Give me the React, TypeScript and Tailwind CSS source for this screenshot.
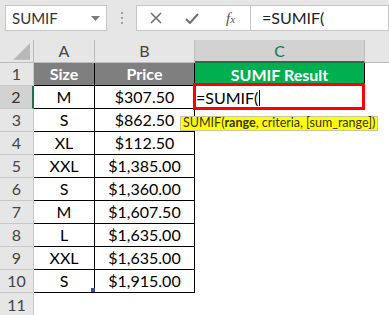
import React from "react";

const rows: [string, string, string][] = [
  ["M", "$307.50", "=SUMIF("],
  ["S", "$862.50", ""],
  ["XL", "$112.50", ""],
  ["XXL", "$1,385.00", ""],
  ["S", "$1,360.00", ""],
  ["M", "$1,607.50", ""],
  ["L", "$1,635.00", ""],
  ["XXL", "$1,635.00", ""],
  ["S", "$1,915.00", ""],
];

export default function App() {
  return (
    <div className="w-[389px] h-[315px] bg-white overflow-hidden relative font-['Lato','Open_Sans',sans-serif]">
      {/* Formula bar */}
      <div className="h-[40px] bg-[#e6e6e6] flex items-start pt-[5px]">
        <div className="ml-[5px] w-[102px] h-[26px] bg-white border border-[#c6c6c6] flex items-center justify-between pl-[6px] pr-[6px]">
          <span className="text-[15px] text-[#333] leading-none">SUMIF</span>
          <svg width="9" height="5" viewBox="0 0 9 5"><path d="M0 0 L9 0 L4.5 5 Z" fill="#7a7a7a" /></svg>
        </div>
        <div className="ml-[14px] mt-[7px] flex flex-col gap-[3px]">
          <div className="w-[2px] h-[2px] bg-[#a0a0a0]" />
          <div className="w-[2px] h-[2px] bg-[#a0a0a0]" />
          <div className="w-[2px] h-[2px] bg-[#a0a0a0]" />
        </div>
        <div className="ml-[13px] w-[114px] h-[26px] bg-white border border-[#c6c6c6] border-r-0 flex items-center">
          <svg className="ml-[13px]" width="12" height="12" viewBox="0 0 12 12">
            <path d="M1 1 L11 11 M11 1 L1 11" stroke="#6f6f6f" strokeWidth="1.6" />
          </svg>
          <svg className="ml-[23px]" width="14" height="11" viewBox="0 0 14 11">
            <path d="M1 6 L5 10 L13 1" stroke="#6f6f6f" strokeWidth="2" fill="none" />
          </svg>
          <span className="ml-[27px] font-['Liberation_Serif',serif] italic text-[15px] text-[#555] leading-none">
            f<span className="text-[11px]">x</span>
          </span>
        </div>
        <div className="flex-1 h-[26px] bg-white border border-[#c6c6c6] flex items-center pl-[11px]">
          <span className="text-[16px] text-[#222] leading-none">=SUMIF(</span>
        </div>
      </div>

      {/* Column headers */}
      <div className="flex h-[23px] bg-[#e6e6e6] text-[16px] text-[#444]">
        <div className="w-[34px] border-r border-b border-[#bcbcbc] flex items-end justify-end pr-[3px] pb-[2px]">
          <svg width="17" height="17" viewBox="0 0 17 17"><path d="M17 0 L17 17 L0 17 Z" fill="#b9b9b9" /></svg>
        </div>
        <div className="w-[61px] border-r border-b border-[#bcbcbc] flex items-center justify-center">A</div>
        <div className="w-[100px] border-r border-b border-[#bcbcbc] flex items-center justify-center">B</div>
        <div className="w-[170px] bg-[#d2d2d2] border-r border-[#bcbcbc] border-b-2 border-b-[#217346] flex items-center justify-center text-[#217346]">C</div>
        <div className="flex-1 border-b border-[#bcbcbc]" />
      </div>

      {/* Row 1 */}
      <div className="flex h-[23px] text-[16px]">
        <div className="w-[34px] bg-[#e6e6e6] border-r border-b border-[#c8c8c8] flex items-center justify-center text-[#444]">1</div>
        <div className="w-[61px] bg-[#7f7f7f] border-r border-b border-black flex items-center justify-center text-white font-bold">Size</div>
        <div className="w-[100px] bg-[#7f7f7f] border-r border-b border-black flex items-center justify-center text-white font-bold">Price</div>
        <div className="w-[170px] bg-[#00b050] border-r border-black flex items-center justify-center text-white font-bold">SUMIF Result</div>
        <div className="flex-1" />
      </div>

      {rows.map(([a, b, c], i) => {
        const n = i + 2;
        const sel = n === 2;
        return (
          <div key={n} className="flex h-[23px] text-[16px] text-black">
            <div
              className={
                sel
                  ? "w-[34px] bg-[#d2d2d2] border-r-2 border-r-[#217346] border-b border-b-[#c8c8c8] flex items-center justify-center text-[#333]"
                  : "w-[34px] bg-[#e6e6e6] border-r border-b border-[#c8c8c8] flex items-center justify-center text-[#444]"
              }
            >
              {n}
            </div>
            <div className="w-[61px] border-r border-b border-black flex items-center justify-center relative">
              {a}
              {n === 10 && <div className="absolute right-[-1px] bottom-[0px] w-[4px] h-[4px] bg-[#3a4da0]" />}
            </div>
            <div className="w-[100px] border-r border-b border-black flex items-center justify-center">{b}</div>
            <div className="w-[170px] flex items-center pl-[1px]">
              {c && (
                <span className="flex items-center">
                  {c}
                  <span className="ml-[1px] w-[1px] h-[16px] bg-black" />
                </span>
              )}
            </div>
            <div className="flex-1" />
          </div>
        );
      })}

      {/* Row 11 */}
      <div className="flex h-[23px] text-[16px]">
        <div className="w-[34px] bg-[#e6e6e6] border-r border-[#c8c8c8] flex items-center justify-center text-[#444]">11</div>
        <div className="flex-1" />
      </div>

      {/* Red annotation box around C2 */}
      <div className="absolute left-[193px] top-[83px] w-[172px] h-[27px] border-[3px] border-[#ff0000]" />

      {/* Tooltip */}
      <div className="absolute left-[180px] top-[116px] h-[15px] px-[2px] bg-[#ffff00] border border-[#c8c8a0] flex items-center text-[12.5px] text-[#333] leading-none whitespace-nowrap">
        SUMIF(<span className="font-bold">range</span>, criteria, [sum_range])
      </div>
    </div>
  );
}
